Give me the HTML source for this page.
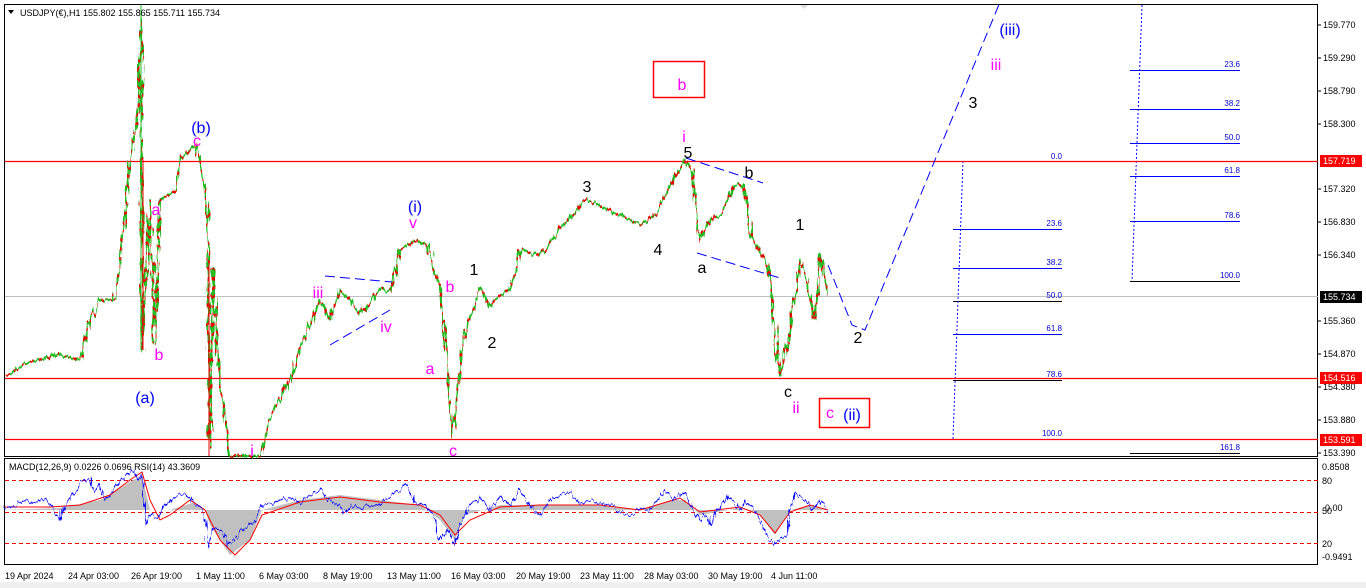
<!DOCTYPE html>
<html><head><meta charset="utf-8"><style>
html,body{margin:0;padding:0;background:#fff;width:1366px;height:588px;overflow:hidden}
svg text{font-family:"Liberation Sans",sans-serif}
</style></head><body>
<svg width="1366" height="588" viewBox="0 0 1366 588" xmlns="http://www.w3.org/2000/svg">
<defs>
<filter id="jit" x="-5%" y="-10%" width="110%" height="120%">
<feTurbulence type="fractalNoise" baseFrequency="0.35 0.05" numOctaves="2" seed="3" result="n"/>
<feDisplacementMap in="SourceGraphic" in2="n" scale="9" xChannelSelector="R" yChannelSelector="G"/>
</filter>
</defs>
<rect x="0" y="0" width="1366" height="588" fill="#fff"/>
<rect x="0" y="582" width="1366" height="6" fill="#f0f0f0"/>
<rect x="4.5" y="4.5" width="1313" height="452" fill="none" stroke="#000"/>
<rect x="4.5" y="458.5" width="1313" height="106" fill="none" stroke="#000"/>
<line x1="5" y1="296.5" x2="1318" y2="296.5" stroke="#c0c0c0"/>
<g stroke="#0000ff" stroke-width="1">
<line x1="953" y1="229.5" x2="1062" y2="229.5"/><line x1="953" y1="268.5" x2="1062" y2="268.5"/>
<line x1="953" y1="301.5" x2="1062" y2="301.5" stroke="#000"/><line x1="953" y1="334.5" x2="1062" y2="334.5"/>
<line x1="953" y1="380.5" x2="1062" y2="380.5" stroke="#000"/>
<line x1="1130" y1="70.5" x2="1240" y2="70.5"/><line x1="1130" y1="109.5" x2="1240" y2="109.5"/>
<line x1="1130" y1="143.5" x2="1240" y2="143.5"/><line x1="1130" y1="176.5" x2="1240" y2="176.5"/>
<line x1="1130" y1="221.5" x2="1240" y2="221.5"/><line x1="1130" y1="281.5" x2="1240" y2="281.5" stroke="#000"/>
<line x1="1130" y1="453.5" x2="1240" y2="453.5" stroke="#000"/>
<polyline points="963,161 953,439" fill="none" stroke-dasharray="2 2"/>
<polyline points="1142,5 1132,281" fill="none" stroke-dasharray="2 2"/>
</g>
<line x1="5" y1="161.5" x2="1318" y2="161.5" stroke="#ff0000" stroke-width="1.2"/>
<line x1="5" y1="378.5" x2="1318" y2="378.5" stroke="#ff0000" stroke-width="1.2"/>
<line x1="5" y1="439.5" x2="1318" y2="439.5" stroke="#ff0000" stroke-width="1.2"/>
<g font-size="8" fill="#0000cc" text-anchor="end">
<text x="1062" y="159">0.0</text><text x="1062" y="226">23.6</text><text x="1062" y="265">38.2</text>
<text x="1062" y="298">50.0</text><text x="1062" y="331">61.8</text><text x="1062" y="377">78.6</text>
<text x="1062" y="436">100.0</text>
<text x="1240" y="67">23.6</text><text x="1240" y="106">38.2</text><text x="1240" y="140">50.0</text>
<text x="1240" y="173">61.8</text><text x="1240" y="218">78.6</text><text x="1240" y="278">100.0</text>
<text x="1240" y="450">161.8</text>
</g>
<g filter="url(#jit)">
<polyline id="pr" fill="none" stroke="#22bb22" stroke-width="2.2" stroke-linejoin="round" points="6,375 30,362 60,355 80,360 90,320 100,300 115,300 120,260 130,160 138,115 141,20 142,350 150,200 155,345 160,200 175,190 180,160 195,145 200,160 207,205 210,450 213,270 220,380 230,456 260,456 270,420 290,380 300,350 320,300 330,320 340,290 350,300 360,315 380,290 392,290 400,250 415,240 428,245 440,290 447,360 452,437 460,370 465,330 480,290 490,305 500,295 510,290 520,250 540,255 560,230 585,200 600,205 620,215 640,225 655,215 670,185 685,160 692,170 700,240 710,220 720,215 735,185 745,185 750,235 760,250 770,270 775,340 780,375 790,330 800,260 805,270 815,320 820,255 825,280 828,295"/>
<polyline fill="none" stroke="#ee0000" stroke-width="2.2" stroke-dasharray="3 6" points="6,375 30,362 60,355 80,360 90,320 100,300 115,300 120,260 130,160 138,115 141,20 142,350 150,200 155,345 160,200 175,190 180,160 195,145 200,160 207,205 210,450 213,270 220,380 230,456 260,456 270,420 290,380 300,350 320,300 330,320 340,290 350,300 360,315 380,290 392,290 400,250 415,240 428,245 440,290 447,360 452,437 460,370 465,330 480,290 490,305 500,295 510,290 520,250 540,255 560,230 585,200 600,205 620,215 640,225 655,215 670,185 685,160 692,170 700,240 710,220 720,215 735,185 745,185 750,235 760,250 770,270 775,340 780,375 790,330 800,260 805,270 815,320 820,255 825,280 828,295"/>
</g>
<line x1="141" y1="5" x2="141" y2="350" stroke="#22bb22"/>
<line x1="143" y1="160" x2="143" y2="350" stroke="#ee0000"/>
<line x1="209" y1="260" x2="209" y2="456" stroke="#ee0000"/>
<g stroke="#0000ff" fill="none" stroke-dasharray="10 5">
<line x1="325" y1="276" x2="392" y2="282"/><line x1="330" y1="345" x2="390" y2="310"/>
<line x1="686" y1="158" x2="763" y2="183"/><line x1="697" y1="253" x2="780" y2="278"/>
<polyline points="828,265 852,325 865,330 1000,2"/>
</g>
<g font-size="16" text-anchor="middle">
<text x="201" y="133" fill="#0000ff">(b)</text><text x="197" y="146" fill="#ff00ff">c</text>
<text x="156" y="215" fill="#ff00ff">a</text><text x="159" y="360" fill="#ff00ff">b</text>
<text x="145" y="403" fill="#0000ff">(a)</text>
<text x="415" y="212" fill="#0000ff">(i)</text><text x="413" y="228" fill="#ff00ff">v</text>
<text x="318" y="298" fill="#ff00ff">iii</text><text x="386" y="332" fill="#ff00ff">iv</text>
<text x="450" y="292" fill="#ff00ff">b</text><text x="430" y="374" fill="#ff00ff">a</text>
<text x="453" y="456" fill="#ff00ff">c</text><text x="252" y="456" fill="#ff00ff">i</text>
<text x="474" y="275" fill="#000">1</text><text x="492" y="348" fill="#000">2</text>
<text x="587" y="192" fill="#000">3</text><text x="658" y="255" fill="#000">4</text>
<text x="688" y="158" fill="#000">5</text><text x="684" y="142" fill="#ff00ff">i</text>
<text x="749" y="178" fill="#000">b</text><text x="702" y="273" fill="#000">a</text>
<text x="800" y="230" fill="#000">1</text><text x="788" y="397" fill="#000">c</text>
<text x="796" y="413" fill="#ff00ff">ii</text><text x="858" y="343" fill="#000">2</text>
<text x="973" y="108" fill="#000">3</text><text x="996" y="70" fill="#ff00ff">iii</text>
<text x="1010" y="35" fill="#0000ff">(iii)</text>
<text x="682" y="90" fill="#ff00ff">b</text>
<text x="830" y="418" fill="#ff00ff">c</text><text x="852" y="420" fill="#0000ff">(ii)</text>
</g>
<rect x="653.5" y="61.5" width="51" height="36" fill="none" stroke="#f00" stroke-width="1.5"/>
<rect x="819.5" y="398.5" width="50" height="29" fill="none" stroke="#f00" stroke-width="1.5"/>
<path d="M8 10 L14 10 L11 14 Z" fill="#000"/>
<text x="20" y="16" font-size="9" fill="#000">USDJPY(€),H1  155.802 155.865 155.711 155.734</text>
<path d="M800 5 L808 5 L804 9Z" fill="#ddd"/>
<g font-size="9" fill="#000">
<text x="1323" y="28">159.770</text><text x="1323" y="61">159.290</text><text x="1323" y="94">158.790</text>
<text x="1323" y="127">158.300</text><text x="1323" y="192">157.320</text><text x="1323" y="225">156.830</text>
<text x="1323" y="258">156.340</text><text x="1323" y="324">155.360</text><text x="1323" y="357">154.870</text>
<text x="1323" y="390">154.380</text><text x="1323" y="423">153.880</text><text x="1323" y="456">153.390</text>
</g>
<g stroke="#000"><line x1="1318" y1="25" x2="1321" y2="25"/><line x1="1318" y1="58" x2="1321" y2="58"/><line x1="1318" y1="91" x2="1321" y2="91"/><line x1="1318" y1="124" x2="1321" y2="124"/><line x1="1318" y1="189" x2="1321" y2="189"/><line x1="1318" y1="222" x2="1321" y2="222"/><line x1="1318" y1="255" x2="1321" y2="255"/><line x1="1318" y1="321" x2="1321" y2="321"/><line x1="1318" y1="354" x2="1321" y2="354"/><line x1="1318" y1="387" x2="1321" y2="387"/><line x1="1318" y1="420" x2="1321" y2="420"/><line x1="1318" y1="453" x2="1321" y2="453"/></g>
<rect x="1320" y="155" width="42" height="12" fill="#f00"/><text x="1323" y="164" font-size="9" fill="#fff">157.719</text>
<rect x="1320" y="291" width="42" height="12" fill="#000"/><text x="1323" y="300" font-size="9" fill="#fff">155.734</text>
<rect x="1320" y="372" width="42" height="12" fill="#f00"/><text x="1323" y="381" font-size="9" fill="#fff">154.516</text>
<rect x="1320" y="434" width="42" height="12" fill="#f00"/><text x="1323" y="443" font-size="9" fill="#fff">153.591</text>
<text x="9" y="470" font-size="9" fill="#000">MACD(12,26,9) 0.0226 0.0696  RSI(14) 43.3609</text>
<g stroke="#f00" stroke-dasharray="4 3"><line x1="5" y1="480.5" x2="1318" y2="480.5"/><line x1="5" y1="512.5" x2="1318" y2="512.5"/><line x1="5" y1="543.5" x2="1318" y2="543.5"/></g>
<path fill="#c0c0c0" d="M5 510 L60 508 L100 500 L130 482 L142 475 L150 510 L170 510 L195 502 L205 510 L210 525 L230 555 L250 540 L262 510 L300 500 L340 495 L380 500 L420 505 L440 520 L455 540 L465 515 L500 505 L540 505 L600 505 L640 510 L670 500 L685 500 L700 515 L740 508 L760 515 L775 535 L790 510 L810 505 L828 510 L828 510 L5 510Z"/>
<polyline fill="none" stroke="#f00" points="5,507 50,507 80,505 110,495 130,480 142,472 150,500 160,520 170,515 190,500 205,510 220,540 235,555 250,540 262,515 300,502 340,497 380,502 420,505 440,515 455,535 470,520 500,507 540,505 600,505 640,510 680,498 700,512 740,507 760,515 775,533 790,512 810,505 828,510"/>
<g filter="url(#jit)">
<polyline fill="none" stroke="#0000ff" points="5,507 15,505 25,500 35,503 45,498 55,510 60,520 65,505 70,498 80,483 90,478 95,492 100,485 105,500 110,495 118,483 125,477 130,472 134,470 138,480 142,475 146,523 150,515 158,518 165,505 175,497 185,493 193,502 200,508 205,520 208,548 212,528 222,530 230,545 238,535 245,527 255,522 262,505 270,505 280,500 290,498 300,503 310,495 318,490 322,488 328,500 340,505 345,513 350,505 360,508 375,505 390,497 395,492 400,490 405,485 410,490 415,503 425,505 435,518 440,540 447,530 455,545 460,525 470,505 480,498 490,510 500,497 510,505 520,490 530,505 540,515 550,500 560,495 570,493 580,505 590,500 600,503 610,505 620,512 630,515 640,508 650,510 660,498 665,490 675,500 685,492 690,505 700,520 705,513 710,525 720,505 730,497 740,510 745,500 755,512 765,530 770,540 775,545 785,535 790,515 795,492 805,500 815,510 820,500 828,512"/>
</g>
<g font-size="9" fill="#000"><text x="1322" y="470">0.8508</text><text x="1322" y="484">80</text><text x="1322" y="514">50</text><text x="1325" y="511">0.00</text><text x="1322" y="547">20</text><text x="1322" y="560">-0.9491</text></g>
<g font-size="9" fill="#000">
<text x="5" y="579">19 Apr 2024</text><text x="68" y="579">24 Apr 03:00</text><text x="131" y="579">26 Apr 19:00</text>
<text x="196" y="579">1 May 11:00</text><text x="259" y="579">6 May 03:00</text><text x="323" y="579">8 May 19:00</text>
<text x="387" y="579">13 May 11:00</text><text x="451" y="579">16 May 03:00</text><text x="516" y="579">20 May 19:00</text>
<text x="580" y="579">23 May 11:00</text><text x="644" y="579">28 May 03:00</text><text x="708" y="579">30 May 19:00</text>
<text x="771" y="579">4 Jun 11:00</text>
</g>
</svg>
</body></html>
